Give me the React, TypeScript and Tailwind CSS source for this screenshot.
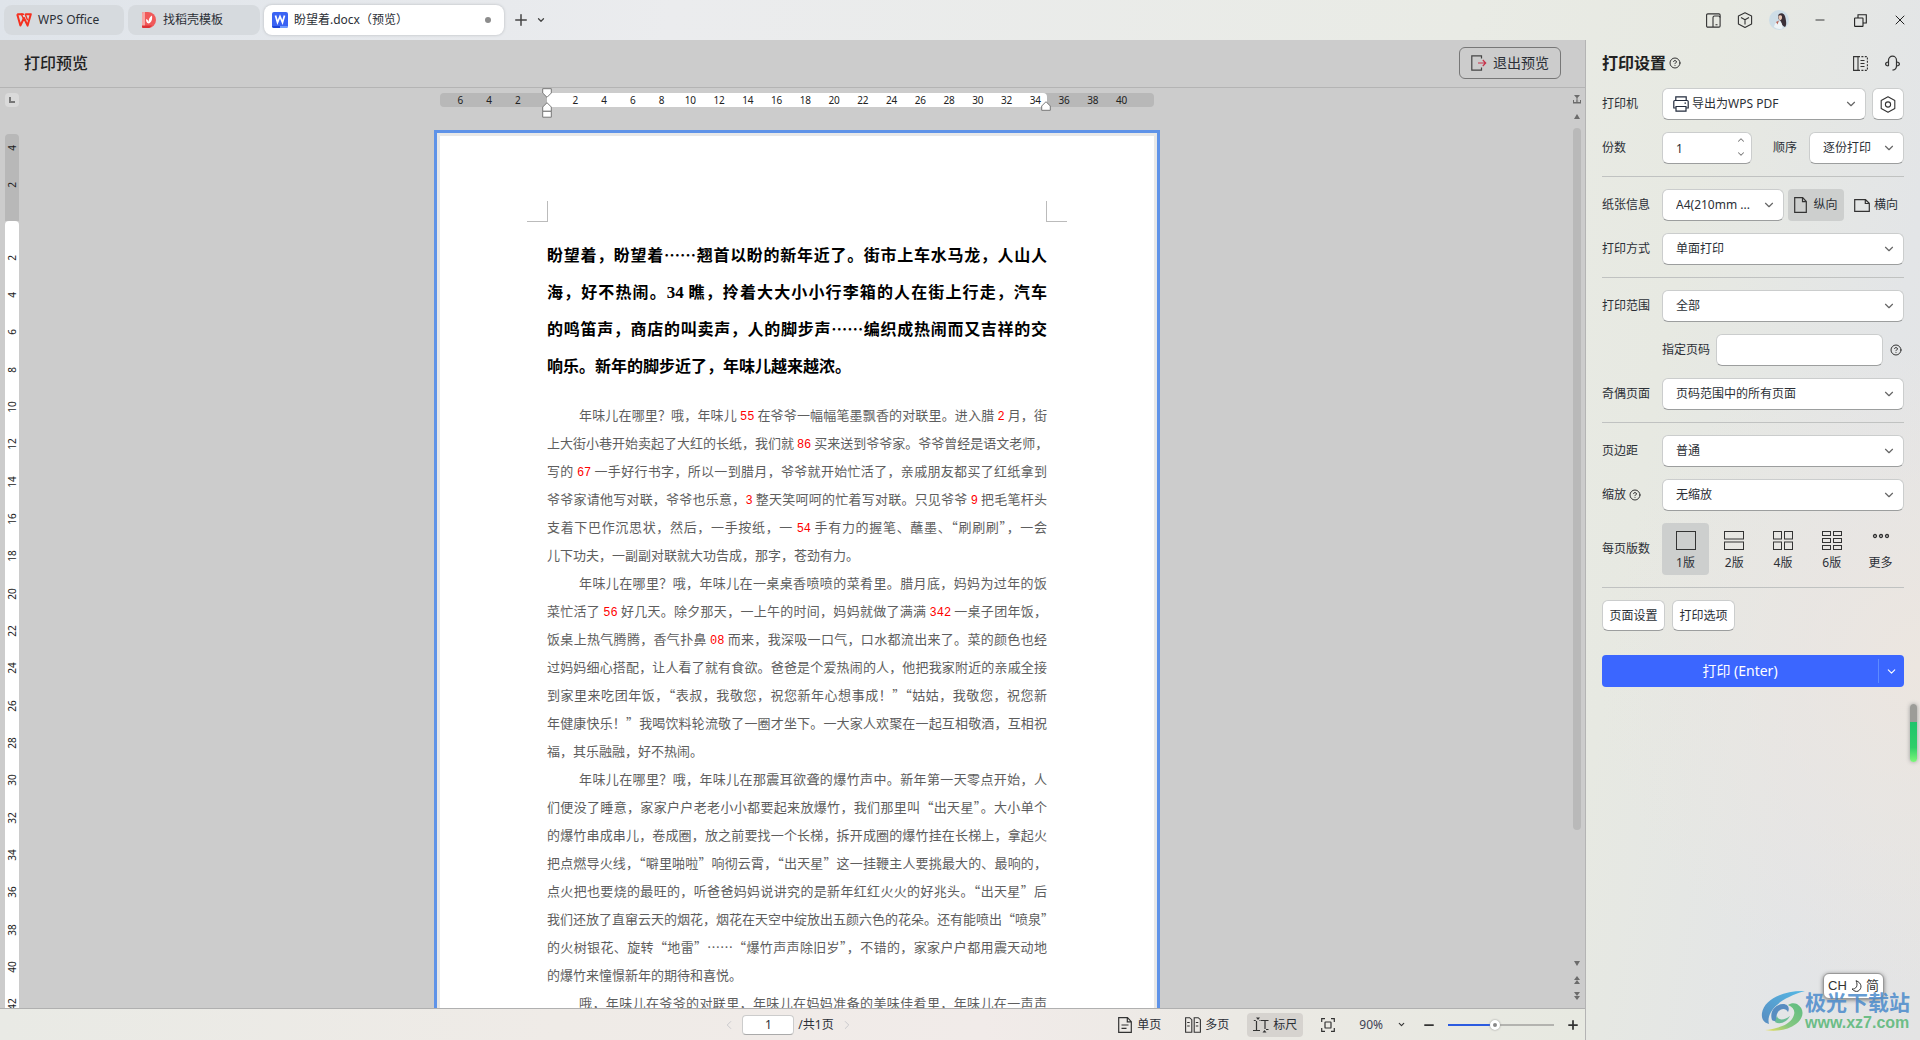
import { useState } from 'react';
import type { ReactNode } from 'react';
import clsx from 'clsx';
import { ChevronDown, ChevronLeft, ChevronRight, ChevronUp, CircleHelp, Minus, Plus, X } from 'lucide-react';

const heading = [
    '盼望着，盼望着……翘首以盼的新年近了。街市上车水马龙，人山人',
    '海，好不热闹。34 瞧，拎着大大小小行李箱的人在街上行走，汽车',
    '的鸣笛声，商店的叫卖声，人的脚步声……编织成热闹而又吉祥的交',
    '响乐。新年的脚步近了，年味儿越来越浓。',
];

const paragraphs = [
    [
        '年味儿在哪里？哦，年味儿 55 在爷爷一幅幅笔墨飘香的对联里。进入腊 2 月，街',
        '上大街小巷开始卖起了大红的长纸，我们就 86 买来送到爷爷家。爷爷曾经是语文老师，',
        '写的 67 一手好行书字，所以一到腊月，爷爷就开始忙活了，亲戚朋友都买了红纸拿到',
        '爷爷家请他写对联，爷爷也乐意，3 整天笑呵呵的忙着写对联。只见爷爷 9 把毛笔杆头',
        '支着下巴作沉思状，然后，一手按纸，一 54 手有力的握笔、蘸墨、“刷刷刷”，一会',
        '儿下功夫，一副副对联就大功告成，那字，苍劲有力。',
    ],
    [
        '年味儿在哪里？哦，年味儿在一桌桌香喷喷的菜肴里。腊月底，妈妈为过年的饭',
        '菜忙活了 56 好几天。除夕那天，一上午的时间，妈妈就做了满满 342 一桌子团年饭，',
        '饭桌上热气腾腾，香气扑鼻 08 而来，我深吸一口气，口水都流出来了。菜的颜色也经',
        '过妈妈细心搭配，让人看了就有食欲。爸爸是个爱热闹的人，他把我家附近的亲戚全接',
        '到家里来吃团年饭，“表叔，我敬您，祝您新年心想事成！”“姑姑，我敬您，祝您新',
        '年健康快乐！”我喝饮料轮流敬了一圈才坐下。一大家人欢聚在一起互相敬酒，互相祝',
        '福，其乐融融，好不热闹。',
    ],
    [
        '年味儿在哪里？哦，年味儿在那震耳欲聋的爆竹声中。新年第一天零点开始，人',
        '们便没了睡意，家家户户老老小小都要起来放爆竹，我们那里叫“出天星”。大小单个',
        '的爆竹串成串儿，卷成圈，放之前要找一个长梯，拆开成圈的爆竹挂在长梯上，拿起火',
        '把点燃导火线，“噼里啪啦”响彻云霄，“出天星”这一挂鞭主人要挑最大的、最响的，',
        '点火把也要烧的最旺的，听爸爸妈妈说讲究的是新年红红火火的好兆头。“出天星”后',
        '我们还放了直窜云天的烟花，烟花在天空中绽放出五颜六色的花朵。还有能喷出“喷泉”',
        '的火树银花、旋转“地雷”……“爆竹声声除旧岁”，不错的，家家户户都用震天动地',
        '的爆竹来憧憬新年的期待和喜悦。',
    ],
    ['哦，年味儿在爷爷的对联里，年味儿在妈妈准备的美味佳肴里，年味儿在一声声'],
];

const horizontalTicks = [-6, -4, -2, ...Array.from({ length: 21 }, (_, i) => i * 2)];
const verticalTicks = Array.from({ length: 21 }, (_, i) => (i + 1) * 2);

// A line that does not end its paragraph fills the text width
const isFullLine = (line: string) => line.length > 28;

const markNumbers = (line: string, className: string) =>
    line.split(/(\d+)/).map((part, i) =>
        /\d/.test(part) ? <span key={i} className={clsx('leading-none', className)}>{part}</span> : part
    );

/* ---------- Icons ---------- */

const WpsLogo = () => (
    <svg width="16" height="14" viewBox="0 0 16 14" fill="none" stroke="#f5301f" strokeWidth="2" strokeLinejoin="round">
        <path d="M1.2 1.2h5.6M1.2 1.2 4.4 12.6 8 5l3.6 7.6 3.2-11.4H9.2" />
        <path d="M8.2 1.2H5.4L7.6 6M9.2 1.2l2.4 6" strokeWidth="1.4" />
    </svg>
);

const DocerLogo = () => (
    <svg width="14" height="16" viewBox="0 0 14 16">
        <path d="M0 1.5Q0 0 1.5 0H6a8 8 0 0 1 0 16H1.5Q0 16 0 14.5z" fill="#f0595a" />
        <path d="M0 1.5Q0 0 1.5 0H3v14H0z" fill="#f7a7a5" />
        <path d="M0 13.5h10L8 15.5Q7 16 6 16H1.5Q0 16 0 14.5z" fill="#dd3236" />
        <path d="M6.8 11.5c-2.4-.6-3-2.6-2.6-4.6 1.5.7 2.3 1.8 2.5 3.2C6.6 7.500 7.500 5 10 3.600c.5 3.800-.3 6.900-3.200 7.900z" fill="#fff" />
    </svg>
);

const WriterLogo = () => (
    <svg width="16" height="16" viewBox="0 0 16 16">
        <rect width="16" height="16" rx="2" fill="#3a63f3" />
        <path d="M0 14h8v2H2q-2 0-2-2z" fill="#1d44d8" />
        <path d="M8 14h8q0 2-2 2H8z" fill="#6f9bff" />
        <path d="m3.500 3.500 2 7L8 4.500l2.500 6 2-7" fill="none" stroke="#fff" strokeWidth="1.700" />
    </svg>
);

const Avatar = () => (
    <svg width="20" height="20" viewBox="0 0 20 20">
        <circle cx="10" cy="10" r="10" fill="#cddde7" />
        <path d="M10 4c3-2 6 0 6.500 4 .6 3.500 1.500 7-.5 9-2-.5-3.500-2.500-4-5.500L9.500 9c-.5-2-.5-4 .5-5z" fill="#3a3038" />
        <path d="M9.500 6c1-1 3-1 3.500.5.200 2-.5 3.500-1.800 3.700-1.300 0-1.900-2-1.700-4.200z" fill="#e8c7b5" />
        <path d="M5 17c.5-4 3-6 5.500-5.500 2 .5 3 3 3 7A10 10 0 0 1 5 17z" fill="#eef4f7" />
        <path d="m7 12 3-1.500-1.500 4z" fill="#b5655a" />
    </svg>
);

const SplitWindowIcon = () => (
    <svg width="15" height="15" viewBox="0 0 15 15" fill="none" stroke="#333" strokeWidth="1.100">
        <rect x=".6" y=".9" width="13.500" height="13.200" rx="1.200" />
        <path d="M7 14V4.500q0-1.500 1.500-1.500h4q1.500 0 1.500 1.500M9.500 11.800h2" />
    </svg>
);

const CubeIcon = () => (
    <svg width="16" height="16" viewBox="0 0 16 16" fill="none" stroke="#333" strokeWidth="1.100" strokeLinejoin="round">
        <path d="M8 .8 14.600 4v8L8 15.400 1.400 12V4z" />
        <path d="M4 5.500 8 7.800l4-2.300M8 7.800V12.500" />
    </svg>
);

const RestoreIcon = () => (
    <svg width="13" height="13" viewBox="0 0 13 13" fill="none" stroke="#222" strokeWidth="1.100">
        <rect x=".6" y="4" width="8.400" height="8.400" rx=".5" />
        <path d="M4 4V.7h8.300V9H9" />
    </svg>
);

const ExitIcon = () => (
    <svg width="16" height="16" viewBox="0 0 16 16" fill="none" strokeWidth="1.200">
        <path d="M10.500 3.500V.8H.8v14.400h9.700v-2.700" stroke="#444" />
        <path d="M7 8h7.500M11.800 5l2.900 3-2.900 3" stroke="#c8324a" />
    </svg>
);

const PrinterIcon = () => (
    <svg width="16" height="16" viewBox="0 0 16 16" fill="none" stroke="#222b3d" strokeWidth="1.200">
        <path d="M2.800 4.500V.8h10.400v3.700M2.800 12H.8V5.500q0-1 1-1h12.400q1 0 1 1V12h-2" />
        <path d="M3 10.500h10v4.700H3zM11.500 7.200H13" />
    </svg>
);

const HexIcon = () => (
    <svg width="16" height="17" viewBox="0 0 16 17" fill="none" stroke="#333" strokeWidth="1.100">
        <path d="M8 .8 14.800 4.500v8L8 16.200 1.200 12.500v-8z" strokeLinejoin="round" />
        <circle cx="8" cy="8.500" r="2.600" />
    </svg>
);

const DockIcon = () => (
    <svg width="15" height="15" viewBox="0 0 15 15" fill="none" stroke="#333" strokeWidth="1.100">
        <path d="M5 .6H.6v13.800H5zM5 .6v13.800M7.500 4.500h4M7.500 7.500h4M7.500 10.500h4" />
        <path d="M5 .6h9.400v13.800H5" strokeDasharray="2 1.400" />
    </svg>
);

const HeadsetIcon = () => (
    <svg width="15" height="16" viewBox="0 0 15 16" fill="none" stroke="#333" strokeWidth="1.200">
        <path d="M3.500 11V5.200a4 4 0 0 1 8 0V11q0 3.500-4 4.200" />
        <path d="M3.500 7Q.6 7.300.6 9t2.900 2M11.500 7q2.900.3 2.900 2t-2.900 2" />
    </svg>
);

const PortraitIcon = () => (
    <svg width="13" height="16" viewBox="0 0 13 16" fill="none" stroke="#333" strokeWidth="1.200">
        <path d="M.7.7h8l3.600 3.800v10.800H.7zM8.500.7v4h3.800" />
    </svg>
);

const LandscapeIcon = () => (
    <svg width="16" height="13" viewBox="0 0 16 13" fill="none" stroke="#333" strokeWidth="1.200">
        <path d="M.7.7h10.800l3.800 3.600v8H.7zM11.300.7v3.800h4" />
    </svg>
);

const SheetIcon = ({ cols, rows }: { cols: number; rows: number }) => {
    const gap = cols > 1 || rows > 1 ? 2 : 0;
    const w = (20 - gap * (cols - 1)) / cols;
    const h = (19 - gap * (rows - 1)) / rows;
    return (
        <svg width="20" height="19" viewBox="0 0 20 19" fill="none" stroke="#333" strokeWidth="1">
            {Array.from({ length: cols * rows }, (_, i) => (
                <rect
                    key={i}
                    x={(i % cols) * (w + gap) + 0.5}
                    y={Math.floor(i / cols) * (h + gap) + 0.5}
                    width={w - 1}
                    height={h - 1}
                />
            ))}
        </svg>
    );
};

const MoreIcon = () => (
    <svg width="18" height="19" viewBox="0 0 18 19" fill="none" stroke="#333" strokeWidth="1.300">
        <circle cx="3" cy="5" r="1.500" />
        <circle cx="9" cy="5" r="1.500" />
        <circle cx="15" cy="5" r="1.500" />
    </svg>
);

const SinglePageIcon = () => (
    <svg width="14" height="16" viewBox="0 0 14 16" fill="none" stroke="#333" strokeWidth="1.200">
        <path d="M.7.7h8.800l3.800 4v10.600H.7zM9.300.9v4h4M3.500 8h7M3.500 11.300h5" />
    </svg>
);

const MultiPageIcon = () => (
    <svg width="16" height="16" viewBox="0 0 16 16" fill="none" stroke="#333" strokeWidth="1.100">
        <path d="M.6.7h4l2.200 2v12.600H.6zM9.200.7h4l2.200 2v12.600H9.200zM2.200 5.500h2.500M2.200 9h2.500M10.800 5.500h2.500M10.800 9h2.500" />
    </svg>
);

const RulerIcon = () => (
    <svg width="16" height="16" viewBox="0 0 16 16" fill="none" stroke="#333" strokeWidth="1.200">
        <path d="M0 13.500h7M3.500 4v9.500M.8 3.500h2M8 3.500h7.500M12 3.500V12M13 12.500h2.500M6.500 3.500h1" />
        <path d="M3 .5h4L5 3zM9.500 15.500h4l-2-2.500z" fill="#333" stroke="none" />
    </svg>
);

const FitIcon = () => (
    <svg width="14" height="14" viewBox="0 0 14 14" fill="none" stroke="#333" strokeWidth="1.200">
        <path d="M4 .7H.7V4M10 .7h3.300V4M4 13.300H.7V10M10 13.300h3.300V10" />
        <rect x="4" y="4" width="6" height="6" rx=".6" />
    </svg>
);

const UpMarker = ({ base }: { base?: boolean }) => (
    <svg width="10" height={base ? 16 : 10} viewBox={base ? '0 0 10 16' : '0 0 10 10'} fill="#fff" stroke="#777" className="block">
        <path d="M5 .7 9.300 5v4.300H.7V5z" />
        {base && <path d="M.7 9.300h8.600v5.900H.7z" />}
    </svg>
);

const DownMarker = () => (
    <svg width="10" height="10" viewBox="0 0 10 10" fill="#fff" stroke="#777" className="block">
        <path d="M5 9.300.7 5V.7h8.600V5z" />
    </svg>
);

/* ---------- Title bar ---------- */

const TitleBar = () => (
    <header className="flex h-10 shrink-0 items-center justify-between pl-1 pr-3">
        <div className="flex items-center gap-1">
            <button className="flex h-[30px] w-[120px] items-center gap-1.5 rounded-lg bg-[#d6dade] pl-3">
                <WpsLogo />
                WPS Office
            </button>
            <button className="flex h-[30px] w-[132px] items-center gap-[7px] rounded-lg bg-[#d6dade] pl-3.5">
                <DocerLogo />
                找稻壳模板
            </button>
            <button className="flex h-[30px] w-60 items-center gap-1.5 rounded-lg bg-white pl-2 pr-[13px] shadow-[0_0_3px_#b5b8bc]">
                <WriterLogo />
                <span className="flex-1 text-left">盼望着.docx（预览）</span>
                <span className="size-1.5 rounded-full bg-[#8c8c8c]" />
            </button>
            <button aria-label="新建" className="ml-1"><Plus size={18} strokeWidth={2} color="#444" /></button>
            <button aria-label="标签列表" className="ml-0.5"><ChevronDown size={10} strokeWidth={3} color="#444" /></button>
        </div>
        <div className="flex items-center">
            <button aria-label="分屏"><SplitWindowIcon /></button>
            <button aria-label="应用" className="ml-4"><CubeIcon /></button>
            <button aria-label="账号" className="ml-4"><Avatar /></button>
            <button aria-label="最小化" className="ml-6"><Minus size={14} strokeWidth={1.500} color="#222" /></button>
            <button aria-label="还原" className="ml-[27px]"><RestoreIcon /></button>
            <button aria-label="关闭" className="ml-[25px]"><X size={16} strokeWidth={1.500} color="#222" /></button>
        </div>
    </header>
);

/* ---------- Preview area ---------- */

const VerticalRuler = () => (
    <div className="flex w-[25px] shrink-0 flex-col px-[5px] pt-[5px] text-[10px] leading-none text-[#222]">
        <button aria-label="制表符" className="flex h-3.5 w-3.5 shrink-0 items-center justify-center rounded bg-[#dadada]">
            <span className="size-[6px] border-b-2 border-l-2 border-[#777]" />
        </button>
        <div className="mt-[27px] flex h-[87px] w-3.5 shrink-0 flex-col rounded-t bg-[#b8b8b8] text-center">
            <span className="flex h-[27px] items-center justify-center"><span className="-rotate-90">4</span></span>
            <span className="flex h-[48px] items-center justify-center"><span className="-rotate-90">2</span></span>
        </div>
        <div className="min-h-0 w-3.5 flex-1 overflow-hidden rounded-t bg-white pt-[18px]">
            <div className="grid h-[784px] auto-rows-fr">
                {verticalTicks.map((tick) => (
                    <span key={tick} className="flex items-center justify-center"><span className="-rotate-90">{tick}</span></span>
                ))}
            </div>
        </div>
    </div>
);

const HorizontalRuler = () => (
    <div className="relative mt-[5px] h-3.5 w-[714px] shrink-0 rounded bg-[#b8b8b8]">
        <div className="absolute inset-y-0 left-[107px] right-[107px] rounded bg-white" />
        <div className="relative flex h-full items-center pl-1.5 pr-[18px] text-[10px] leading-none text-[#222]">
            {horizontalTicks.map((tick) => (
                <span key={tick} className="flex-1 text-center">{tick === 0 ? '' : Math.abs(tick)}</span>
            ))}
        </div>
        <div className="absolute -top-[5px] left-[102px]">
            <DownMarker />
            <div className="mt-1"><UpMarker base /></div>
        </div>
        <div className="absolute left-[601px] top-2"><UpMarker /></div>
    </div>
);

const Page = () => (
    <article
        lang="zh-CN"
        className="mt-[23px] w-[726px] grow border-3 border-b-0 border-[#5f93e8] bg-white font-['Noto_Sans_CJK_SC',sans-serif] shadow-[inset_0_0_0_3px_#e8e8e8]"
    >
        <div className="flex justify-between px-[90px] pt-[68px]">
            <span className="h-[21px] w-[21px] border-b border-r border-[#bbb]" />
            <span className="h-[21px] w-[21px] border-b border-l border-[#bbb]" />
        </div>
        <div className="mx-auto w-[500px] whitespace-nowrap pt-3.5">
            <h1 className="text-[16px] font-bold leading-[37px] text-black">
                {heading.map((line) => (
                    <span key={line} className={clsx('block h-[37px]', isFullLine(line) && '[text-align-last:justify]')}>
                        {markNumbers(line, "font-['Liberation_Serif',serif] text-[17px]")}
                    </span>
                ))}
            </h1>
            <div className="pt-[17px] text-[13px] leading-7 text-[#5e5e5e]">
                {paragraphs.map((lines) => (
                    <p key={lines[0]}>
                        {lines.map((line, i) => (
                            <span
                                key={line}
                                className={clsx('block h-7', i === 0 && 'pl-8', isFullLine(line) && '[text-align-last:justify]')}
                            >
                                {markNumbers(line, "font-['Liberation_Mono',monospace] text-[12px] text-[#ff0000]")}
                            </span>
                        ))}
                    </p>
                ))}
            </div>
        </div>
    </article>
);

const ScrollBar = () => (
    <div className="flex w-4 shrink-0 flex-col items-center pb-2 pt-[7px]">
        <svg width="8" height="9" viewBox="0 0 8 9" fill="#6b6b6b">
            <path d="M1 0h6L4 3.500zM3.500 3h1v2h-1zM0 5h1v2h2V5h.7v2h.7V5h.7v2H7V5h1v3.500H0z" />
        </svg>
        <svg width="6" height="5" viewBox="0 0 6 5" fill="#6b6b6b" className="mt-2.5"><path d="M3 0 6 5H0z" /></svg>
        <div className="mt-[9px] w-2 flex-[702] rounded bg-[#b9b9b9]" />
        <div className="flex-[131]" />
        <svg width="6" height="5" viewBox="0 0 6 5" fill="#6b6b6b"><path d="M0 0h6L3 5z" /></svg>
        <svg width="6" height="8" viewBox="0 0 6 8" fill="#6b6b6b" className="mt-[10px]"><path d="m3 0 3 4H0zM3 4l3 4H0z" /></svg>
        <svg width="6" height="8" viewBox="0 0 6 8" fill="#6b6b6b" className="mt-2"><path d="M0 0h6L3 4zM0 4h6L3 8z" /></svg>
    </div>
);

const StatusBar = () => (
    <footer className="grid h-8 shrink-0 grid-cols-[1fr_auto_1fr] items-center border-t border-[#b0b0b0] bg-[linear-gradient(to_right,#e9eae5,#efebe7_35%,#f1ebe9_62%,#ebe9e4_78%,#e7e9e1)] pr-[5px]">
        <span />
        <div className="flex items-center pr-1">
            <button aria-label="上一页"><ChevronLeft size={14} strokeWidth={1.500} color="#c3c3c8" /></button>
            <input aria-label="页码" defaultValue="1" className="ml-1.5 h-5 w-[52px] rounded border border-[#ccc] border-b-[#aaa] bg-white text-center" />
            <span className="ml-1">/共1页</span>
            <button aria-label="下一页" className="ml-1.5"><ChevronRight size={14} strokeWidth={1.500} color="#c3c3c8" /></button>
        </div>
        <div className="flex items-center justify-end">
            <button className="flex items-center gap-[5px]"><SinglePageIcon />单页</button>
            <button className="ml-6 flex items-center gap-1"><MultiPageIcon />多页</button>
            <button className="ml-[18px] flex h-6 w-14 items-center gap-1 rounded bg-[#d6d3cf] pl-1.5"><RulerIcon />标尺</button>
            <button aria-label="适合页面" className="ml-[18px]"><FitIcon /></button>
            <button className="ml-6 flex items-center gap-3.5 text-[#3d4255]">
                90%
                <ChevronDown size={9} strokeWidth={3} color="#333" />
            </button>
            <button aria-label="缩小" className="ml-4"><Minus size={14} strokeWidth={3} color="#333" /></button>
            <input
                type="range"
                aria-label="缩放比例"
                defaultValue={44}
                className="mx-3 h-0.5 w-[106px] appearance-none bg-[linear-gradient(to_right,#2b5be0_44%,#b3b3af_44%)] [&::-webkit-slider-thumb]:size-2.5 [&::-webkit-slider-thumb]:appearance-none [&::-webkit-slider-thumb]:rounded-full [&::-webkit-slider-thumb]:border-3 [&::-webkit-slider-thumb]:border-white [&::-webkit-slider-thumb]:bg-[#888] [&::-webkit-slider-thumb]:shadow-[0_0_2px_#888]"
            />
            <button aria-label="放大"><Plus size={14} strokeWidth={3} color="#333" /></button>
        </div>
    </footer>
);

const Preview = () => (
    <main className="flex min-w-0 flex-1 flex-col border-r border-[#b4b4b4] bg-[#ccc]">
        <div className="flex h-12 shrink-0 items-center justify-between border-b border-[#b4b4b4] px-6 pb-0.5">
            <h2 className="text-base font-medium text-[#222]">打印预览</h2>
            <button className="flex h-8 w-[102px] items-center justify-center gap-1.5 rounded-md border border-[#777] text-sm">
                <ExitIcon />
                退出预览
            </button>
        </div>
        <div className="flex min-h-0 flex-1">
            <VerticalRuler />
            <div className="flex min-w-0 flex-1 flex-col items-center overflow-hidden">
                <HorizontalRuler />
                <Page />
            </div>
            <ScrollBar />
        </div>
        <StatusBar />
    </main>
);

/* ---------- Settings panel ---------- */

const fieldBox = 'rounded-md border border-[#cbcdcd] border-b-[#9c9e9e] bg-white';

interface SelectProps {
    id: string;
    value: string;
    className?: string;
    icon?: ReactNode;
    selectClassName?: string;
}

const Select = ({ id, value, className, icon, selectClassName = 'pl-[13px]' }: SelectProps) => (
    <div className={clsx('relative', className)}>
        {icon && <span className="absolute left-[11px] top-2">{icon}</span>}
        <select id={id} className={clsx(fieldBox, 'h-8 w-full appearance-none pr-6', selectClassName)}>
            <option>{value}</option>
        </select>
        <ChevronDown size={14} strokeWidth={2} color="#666" className="pointer-events-none absolute right-2 top-[9px]" />
    </div>
);

const Row = ({ id, label, help, children }: { id?: string; label: string; help?: boolean; children: ReactNode }) => (
    <div className="flex items-center">
        <span className="flex w-[60px] shrink-0 items-center gap-[3px]">
            <label htmlFor={id}>{label}</label>
            {help && <CircleHelp size={12} strokeWidth={2} color="#333" />}
        </span>
        {children}
    </div>
);

const Divider = () => <hr className="border-[#c0c2c1]" />;

const layouts = [
    { label: '1版', icon: <SheetIcon cols={1} rows={1} /> },
    { label: '2版', icon: <SheetIcon cols={1} rows={2} /> },
    { label: '4版', icon: <SheetIcon cols={2} rows={2} /> },
    { label: '6版', icon: <SheetIcon cols={2} rows={3} /> },
    { label: '更多', icon: <MoreIcon /> },
];

const SettingsPanel = () => {
    const [layout, setLayout] = useState('1版');

    return (
        <aside className="w-[334px] shrink-0 px-4">
            <div className="flex h-12 items-center pb-0.5">
                <h2 className="text-base font-bold text-[#222]">打印设置</h2>
                <CircleHelp size={12} strokeWidth={2} color="#333" className="ml-[3px]" />
                <button aria-label="停靠" className="ml-auto"><DockIcon /></button>
                <button aria-label="客服" className="ml-[17px] mr-1"><HeadsetIcon /></button>
            </div>

            <form className="flex flex-col gap-3" onSubmit={(e) => e.preventDefault()}>
                <Row id="printer" label="打印机">
                    <Select id="printer" value="导出为WPS PDF" className="flex-1" icon={<PrinterIcon />} selectClassName="pl-[29px]" />
                    <button type="button" aria-label="打印机属性" className={clsx(fieldBox, 'ml-1.5 flex size-8 items-center justify-center')}>
                        <HexIcon />
                    </button>
                </Row>
                <Row id="copies" label="份数">
                    <div className="relative">
                        <input id="copies" defaultValue="1" className={clsx(fieldBox, 'h-8 w-[90px] pl-[13px]')} />
                        <div className="absolute right-1.5 top-[3px] flex flex-col gap-1">
                            <button type="button" aria-label="增加"><ChevronUp size={10} strokeWidth={2.500} color="#777" className="block" /></button>
                            <button type="button" aria-label="减少"><ChevronDown size={10} strokeWidth={2.500} color="#777" className="block" /></button>
                        </div>
                    </div>
                    <label htmlFor="order" className="ml-auto mr-3">顺序</label>
                    <Select id="order" value="逐份打印" className="w-[95px]" />
                </Row>
                <Divider />
                <Row id="paper" label="纸张信息">
                    <Select id="paper" value="A4(210mm ..." className="w-[122px]" />
                    <button type="button" className="ml-1 flex h-8 w-14 items-center justify-center gap-1.5 rounded bg-[#cdcfce]">
                        <PortraitIcon />
                        纵向
                    </button>
                    <button type="button" className="flex h-8 flex-1 items-center justify-end gap-1 rounded pr-1.5">
                        <LandscapeIcon />
                        横向
                    </button>
                </Row>
                <Row id="duplex" label="打印方式">
                    <Select id="duplex" value="单面打印" className="flex-1" />
                </Row>
                <Divider />
                <Row id="range" label="打印范围">
                    <Select id="range" value="全部" className="flex-1" />
                </Row>
                <div className="flex items-center pl-[60px]">
                    <label htmlFor="pages">指定页码</label>
                    <input id="pages" className={clsx(fieldBox, 'ml-1.5 h-8 min-w-0 flex-1 px-3')} />
                    <CircleHelp size={12} strokeWidth={2} color="#333" className="ml-[7px] mr-0.5" />
                </div>
                <Row id="parity" label="奇偶页面">
                    <Select id="parity" value="页码范围中的所有页面" className="flex-1" />
                </Row>
                <Divider />
                <Row id="margin" label="页边距">
                    <Select id="margin" value="普通" className="flex-1" />
                </Row>
                <Row id="scale" label="缩放" help>
                    <Select id="scale" value="无缩放" className="flex-1" />
                </Row>
                <Row label="每页版数">
                    <div className="flex flex-1 justify-between">
                        {layouts.map((item) => (
                            <button
                                key={item.label}
                                type="button"
                                onClick={() => setLayout(item.label)}
                                className={clsx('flex h-[52px] w-[47px] flex-col items-center gap-[5px] rounded pt-2', layout === item.label && 'bg-[#cdcfce]')}
                            >
                                {item.icon}
                                <span className="leading-4">{item.label}</span>
                            </button>
                        ))}
                    </div>
                </Row>
                <Divider />
                <div className="flex gap-[7px]">
                    <button type="button" className={clsx(fieldBox, 'h-[31px] w-[63px]')}>页面设置</button>
                    <button type="button" className={clsx(fieldBox, 'h-[31px] w-[63px]')}>打印选项</button>
                </div>
                <div className="mt-3 flex h-8 items-center rounded bg-[#3b66ff] text-sm text-white">
                    <button type="submit" className="flex-1">打印 (Enter)</button>
                    <button type="button" aria-label="更多打印选项" className="flex h-6 w-[26px] items-center justify-center border-l border-[#5e8bff]">
                        <ChevronDown size={13} />
                    </button>
                </div>
            </form>
        </aside>
    );
};

/* ---------- Floating items ---------- */

const Watermark = () => (
    <div className="pointer-events-none absolute bottom-2 right-2.5 flex items-center">
        <svg width="44" height="42" viewBox="0 0 44 42" className="opacity-90">
            <defs>
                <linearGradient id="swoosh-blue" x1="1" y1="0" x2="0" y2="1">
                    <stop offset="0" stopColor="#45b4e6" />
                    <stop offset="1" stopColor="#4a84bd" />
                </linearGradient>
                <linearGradient id="swoosh-green" x1="1" y1="0" x2="0" y2="1">
                    <stop offset="0" stopColor="#4fb878" />
                    <stop offset=".6" stopColor="#7cc576" />
                    <stop offset="1" stopColor="#f0e04a" />
                </linearGradient>
            </defs>
            <path d="M44 1C24 0 3 9 1 23c-1 7 3 10 7 11C5 24 15 9 44 1z" fill="url(#swoosh-blue)" />
            <path d="M11 30c-3-9 4-16 11-16 5 0 7 4 5 8-2-4-7-4-10 0-2 3-2 6 0 8-2 2-5 1-6 0z" fill="#4a84bd" />
            <path d="M36 14c8 5 7 14-1 20-8 6-20 8-31 6 10-1 22-4 27-11 4-6 3-11-4-14 3-2 6-2 9-1z" fill="url(#swoosh-green)" />
            <path d="M16 26c1 5 8 4 13 0-3 6-10 9-15 6z" fill="#5fb98c" />
        </svg>
        <div className="flex flex-col">
            <span className="text-[21px] font-bold leading-[24px] text-[#4a8acb]/85">极光下载站</span>
            <span className="font-['Liberation_Sans',sans-serif] text-[16px] font-bold leading-[18px] text-[#5cb87a]/90">www.xz7.com</span>
        </div>
    </div>
);

const ImeBadge = () => (
    <div className="absolute bottom-[41px] right-9 flex h-[26px] w-[61px] items-center justify-center gap-1 rounded-md border border-[#999] bg-white font-['Liberation_Sans','Noto_Sans_CJK_SC',sans-serif] text-[13px] text-[#333] shadow-[0_1px_4px_#777]">
        CH
        <svg width="11" height="12" viewBox="0 0 11 12" fill="none" stroke="#333">
            <path d="M5 .7c6 2 6.500 8 2 10.500-2 .6-4 0-6-2.200 4 .5 6.500-3.500 4-8.300z" />
        </svg>
        简
    </div>
);

export default function App() {
    return (
        <div className="relative flex h-screen flex-col overflow-hidden bg-[radial-gradient(circle_at_100%_64%,#ece6e0,transparent_16%),linear-gradient(100deg,#dfe4ea,#ebecee_32%,#e9ebe5_70%,#e7e9e2_82%,#e3e5e7_93%,#e4e4e4)] font-['Noto_Sans','Noto_Sans_CJK_SC',sans-serif] text-[12px] text-[#2b2f36]">
            <TitleBar />
            <div className="flex min-h-0 flex-1">
                <Preview />
                <SettingsPanel />
            </div>
            <div className="absolute right-[3px] top-[704px] h-[58px] w-[7px] rounded-full bg-[linear-gradient(#9c9c98_31%,#1fc46b_31%,#2fcf68_75%,#7df77a)] shadow-[0_0_4px_#999]" />
            <ImeBadge />
            <Watermark />
        </div>
    );
}
